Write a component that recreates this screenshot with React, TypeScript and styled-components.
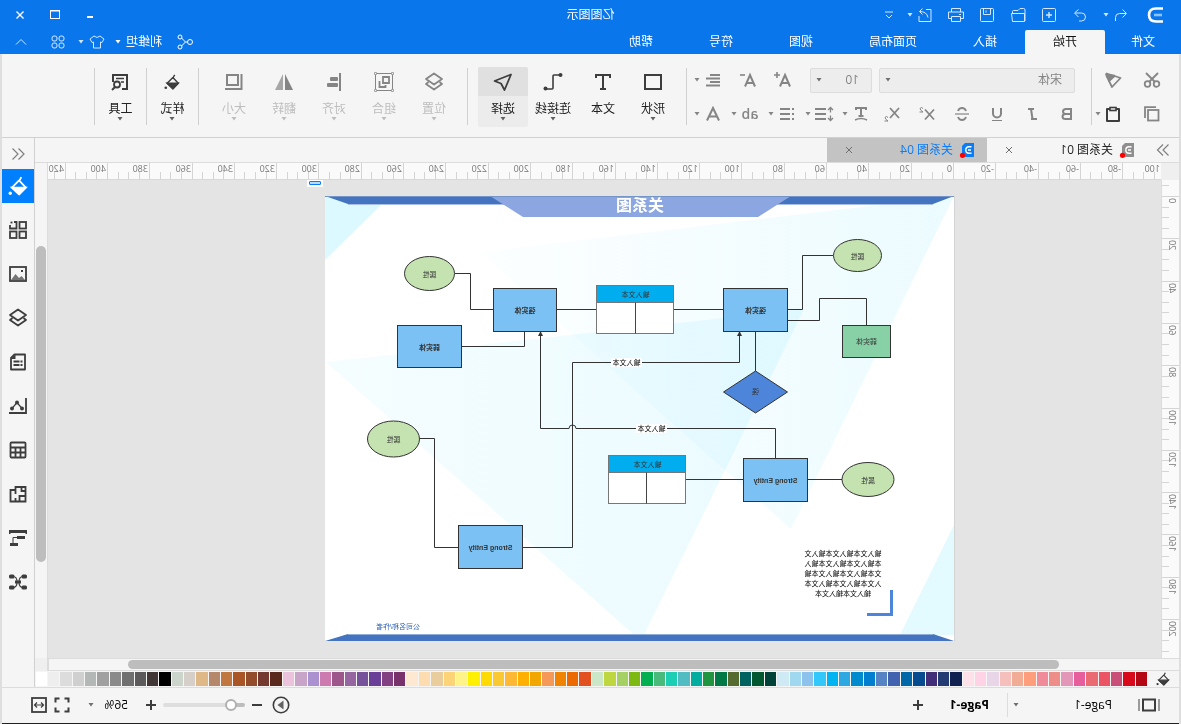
import React from "react";
import styled, { createGlobalStyle, css } from "styled-components";

const FONT = '"Open Sans", "Noto Sans CJK SC", sans-serif';

const Global = createGlobalStyle`
  *, *::before, *::after { box-sizing: border-box; }
  body { margin: 0; background: #f5f5f5; font-family: ${FONT}; font-size: 12px; line-height: 16px; color: #222; }
  button, select, input { font: inherit; color: inherit; margin: 0; }
  svg { display: block; flex: none; }
`;

/* The window is shown as a mirror image: everything is flipped once, here. */
const Shell = styled.div`
  display: flex;
  flex-direction: column;
  min-height: 100vh;
  transform: scaleX(-1);
`;

/* ---------- shared parts ---------- */

const PlainButton = styled.button`
  display: flex;
  align-items: center;
  justify-content: center;
  padding: 0;
  border: 0;
  background: none;
  white-space: nowrap;
`;

const IconButton = styled(PlainButton)<{ $w?: number }>`
  width: ${(p) => p.$w ?? 16}px;
  height: 20px;
`;

const Row = styled.div<{ $gap?: number }>`
  display: flex;
  align-items: center;
  gap: ${(p) => p.$gap ?? 0}px;
`;

type IconProps = { w?: number; h?: number; sw?: number; children: React.ReactNode };

const Icon = ({ w = 16, h = w, sw = 1, children }: IconProps) => (
  <svg width={w} height={h} viewBox={`0 0 ${w} ${h}`} fill="none" stroke="currentColor" strokeWidth={sw} aria-hidden="true">
    {children}
  </svg>
);

const Solid = ({ children }: { children: React.ReactNode }) => (
  <g fill="currentColor" stroke="none">{children}</g>
);

const Caret = () => (
  <Icon w={10} h={4}>
    <Solid><path d="M2.5 0h5L5 3.5z" /></Solid>
  </Icon>
);

const CaretButton = ({ label }: { label: string }) => (
  <IconButton $w={10} aria-label={label}><Caret /></IconButton>
);

/* ---------- title bar ---------- */

const TitleBar = styled.header`
  background: #0976ec;
  color: #fff;
`;

const TitleRow = styled.div`
  display: grid;
  grid-template-columns: 1fr auto 1fr;
  align-items: center;
  height: 30px;
`;

const QuickBar = styled.div`
  display: flex;
  align-items: center;
  gap: 11px;
  padding-left: 13px;
  color: #d5e8fd;
`;

const WindowButtons = styled.div`
  display: flex;
  justify-content: flex-end;
  padding-right: 3px;
`;

const WindowButton = styled(PlainButton)`
  width: 35px;
  height: 28px;
`;

const MenuRow = styled.div`
  display: flex;
  justify-content: space-between;
  height: 24px;
`;

const MenuTabs = styled.nav`
  display: flex;
  align-items: stretch;
`;

const MenuTab = styled(PlainButton)<{ $active?: boolean; $first?: boolean }>`
  padding: 0 ${(p) => (p.$first ? 26 : 28)}px;
  border-radius: 2px 2px 0 0;
  ${(p) => p.$active && css`background: #f5f5f5; color: #111;`}
`;

const UserArea = styled.div`
  display: flex;
  align-items: center;
  padding-right: 13px;
  gap: 21px;
  color: #d5e8fd;
`;

const UserButton = styled(PlainButton)`
  gap: 3px;
  color: #fff;
  & > svg:first-child { margin-right: 12px; }
`;

/* ---------- ribbon ---------- */

const Frame = styled.div`
  flex: 1;
  display: flex;
  flex-direction: column;
  border: solid #dedede;
  border-width: 0 2px;
`;

const Ribbon = styled.div`
  display: flex;
  align-items: flex-start;
  height: 84px;
  padding: 13px 0 0 17px;
  border-bottom: 1px solid #d0d0d0;
  background: #f5f5f5;
  color: #858585;
`;

const RibbonRows = styled.div<{ $w?: number }>`
  display: flex;
  flex-direction: column;
  gap: 8px;
  width: ${(p) => (p.$w ? p.$w + "px" : "auto")};
`;

const RibbonRow = styled(Row)`
  height: 26px;
`;

const Divider = styled.div<{ $before?: number; $after?: number }>`
  width: 1px;
  height: 57px;
  margin: 1px ${(p) => p.$after ?? 0}px 0 ${(p) => p.$before ?? 0}px;
  background: #d0d0d0;
`;

const SelectBox = styled.div<{ $w: number; $bare?: boolean }>`
  display: flex;
  align-items: center;
  position: relative;
  width: ${(p) => p.$w}px;
  height: 25px;
  ${(p) => p.$bare ? css`color: #000;` : css`
    border: 1px solid #dcdcdc;
    border-radius: 2px;
    background: #ededed;
  `}
  select {
    width: 100%;
    height: 100%;
    padding: 0 0 0 ${(p) => (p.$bare ? 0 : 12)}px;
    border: 0;
    background: none;
    appearance: none;
  }
  svg { position: absolute; right: ${(p) => (p.$bare ? 0 : 3)}px; pointer-events: none; color: #707070; }
`;

const Tool = styled.button<{ $w?: number; $selected?: boolean; $off?: boolean }>`
  display: flex;
  flex-direction: column;
  align-items: center;
  width: ${(p) => p.$w ?? 50}px;
  height: 60px;
  padding: 0;
  border: 0;
  border-radius: 2px;
  background: ${(p) => (p.$selected ? "#ececec" : "none")};
  color: ${(p) => (p.$off ? "#bdbdbd" : "#222")};
  overflow: hidden;
`;

const ToolIcon = styled.span<{ $selected?: boolean; $off?: boolean }>`
  display: flex;
  align-items: center;
  justify-content: center;
  align-self: stretch;
  height: 29px;
  margin-bottom: 5px;
  background: ${(p) => (p.$selected ? "#e0e0e0" : "none")};
  color: ${(p) => (p.$off ? "#858585" : "#3d3d3d")};
`;

const ToolCaret = styled.span<{ $off?: boolean }>`
  color: ${(p) => (p.$off ? "#bdbdbd" : "#606060")};
`;

/* ---------- workspace ---------- */

const Workspace = styled.div`
  flex: 1;
  display: flex;
`;

const MainColumn = styled.main`
  flex: 1;
  min-width: 0;
  display: flex;
  flex-direction: column;
`;

const DocTabs = styled.div`
  display: flex;
  height: 25px;
  border-bottom: 1px solid #dcdcdc;
  background: #f5f5f5;
  color: #808080;
`;

const ExpandButton = styled(PlainButton)`
  width: 32px;
  height: 24px;
`;

const DocTab = styled.div<{ $current?: boolean }>`
  display: flex;
  align-items: center;
  width: 160px;
  padding: 0 14px 0 11px;
  gap: 8px;
  background: ${(p) => (p.$current ? "#c3c3c3" : "none")};
  color: ${(p) => (p.$current ? "#0a7cf5" : "#222")};
  button:last-child { margin-left: auto; color: #707070; }
`;

const RulerRow = styled.div`
  display: flex;
  height: 17px;
  background: #f5f5f5;
`;

const RulerCorner = styled.div`
  width: 18px;
  background: #efefef;
`;

const HRuler = styled.div`
  flex: 1;
  min-width: 0;
  overflow: hidden;
  border-bottom: 1px solid #d8d8d8;
  background: #fafafa;
  svg { width: 100%; }
`;

const RulerEnd = styled.div`
  width: 13px;
  border-left: 1px solid #dcdcdc;
`;

const RulerText = styled.text<{ $end?: boolean }>`
  font: 9px ${FONT};
  fill: #777;
  text-anchor: ${(p) => (p.$end ? "end" : "start")};
`;

const CanvasRow = styled.div`
  flex: 1;
  display: flex;
  min-height: 478px;
`;

const VRuler = styled.div`
  width: 18px;
  background: #fafafa;
  border-right: 1px solid #dcdcdc;
`;

const Canvas = styled.div`
  flex: 1;
  min-width: 0;
  display: flex;
  align-items: flex-start;
  gap: 2px;
  padding: 0 0 0 207px;
  background: #e4e4e4;
  overflow: hidden;
`;

const Sheet = styled.div`
  margin-top: 16px;
  background: #fff;
  box-shadow: -1px 0 0 #d4d4d4;
`;

const PageMark = styled.div`
  width: 16px;
  height: 7px;
  padding: 1px 2px 2px;
  background: #fff;
  &::before {
    content: "";
    display: block;
    height: 4px;
    border: 1px solid #0a7cf5;
    border-radius: 1px;
    background: #b8dcff;
  }
`;

const VScroll = styled.div`
  width: 13px;
  padding: 0 1px;
  border-left: 1px solid #dcdcdc;
  background: #f5f5f5;
  display: grid;
  grid-template-rows: 66fr 316fr 96fr;
`;

const Thumb = styled.div`
  border-radius: 5px;
  background: #bdbdbd;
`;

const HScrollRow = styled.div`
  display: flex;
  height: 13px;
  background: #efefef;
`;

const HScroll = styled.div`
  flex: 1;
  display: grid;
  grid-template-columns: 120fr 932fr 79fr;
  padding: 1px 0;
  border: 1px solid #dcdcdc;
  border-left: 0;
  background: #f5f5f5;
`;

const Palette = styled.div`
  display: flex;
  height: 16px;
  align-items: center;
  padding-right: 1px;
  background: #f5f5f5;
`;

const PaletteLead = styled.div`
  display: flex;
  justify-content: center;
  width: 32px;
  color: #3d3d3d;
`;

const Swatches = styled.div`
  flex: 1;
  display: flex;
  gap: 1px;
`;

const Swatch = styled.button<{ $c: string }>`
  flex: 1;
  min-width: 0;
  height: 14px;
  padding: 0;
  border: 0;
  background: ${(p) => p.$c};
`;

const SidePanel = styled.aside`
  width: 33px;
  border-left: 1px solid #d0d0d0;
  background: #f5f5f5;
  display: flex;
  flex-direction: column;
  gap: 10px;
  color: #3d3d3d;
`;

const Collapse = styled(PlainButton)`
  height: 31px;
  margin-bottom: -10px;
  color: #808080;
`;

const SideButton = styled(PlainButton)<{ $active?: boolean }>`
  height: 34px;
  ${(p) => p.$active && css`background: #007fff; color: #fff;`}
`;

/* ---------- status bar ---------- */

const StatusBar = styled.footer`
  display: flex;
  justify-content: space-between;
  align-items: center;
  height: 37px;
  padding: 0 29px 1px 19px;
  border-top: 1px solid #dcdcdc;
  border-bottom: 1px solid #222;
  background: #f5f5f5;
  color: #3d3d3d;
`;

const StatusDivider = styled.div`
  width: 1px;
  height: 24px;
  margin: 0 18px 0 3px;
  background: #dcdcdc;
`;

const PageTab = styled(PlainButton)`
  margin-right: 24px;
  font-weight: 700;
  color: #000;
`;

const PageSelect = styled(SelectBox)`
  margin-left: 26px;
`;

const Zoom = styled.input`
  width: 82px;
  height: 14px;
  appearance: none;
  background: none;
  &::-webkit-slider-runnable-track {
    height: 4px;
    border-radius: 2px;
    background: linear-gradient(to right, #bdbdbd 16%, #dedede 16%);
  }
  &::-webkit-slider-thumb {
    appearance: none;
    width: 12px;
    height: 12px;
    margin-top: -4px;
    border: 2px solid #b0b0b0;
    border-radius: 50%;
    background: #fff;
  }
`;

/* ---------- icons ---------- */

const BucketShape = ({ s = 18 }: { s?: number }) => (
  <svg width={s} height={s} viewBox="0 0 18 18" fill="none" stroke="currentColor" strokeWidth="1.600" aria-hidden="true">
    <path d="M6 1l2 3.500M8 4L2 10.500l6 6 6.500-6z" strokeLinejoin="round" />
    <path d="M2 10.500h12.500l-6.500 6z" fill="currentColor" />
    <circle cx="16" cy="15.500" r="1.500" fill="currentColor" stroke="none" />
  </svg>
);

const LayersShape = ({ s = 20 }: { s?: number }) => (
  <svg width={s} height={s} viewBox="0 0 20 20" fill="none" stroke="currentColor" strokeWidth="1.800" aria-hidden="true">
    <path d="M10 1.500L18 7l-8 5.500L2 7z" strokeLinejoin="round" />
    <path d="M4.500 10L2 12l8 5.500 8-5.500-2.500-2" strokeLinejoin="round" />
  </svg>
);

const Logo = () => (
  <svg width="16" height="18" viewBox="0 0 16 18" fill="none" stroke="#fff" aria-hidden="true">
    <path d="M0 2.500h7C11.500 2.500 14 5 14 9s-2.500 6.500-7 6.500H0" strokeWidth="2.600" />
    <path d="M1 9h8" strokeWidth="2.600" stroke="#8cc2fa" />
  </svg>
);

const FileBadge = ({ color }: { color: string }) => (
  <svg width="17" height="16" viewBox="0 0 17 16" aria-hidden="true">
    <path d="M2 1h9l3 3v11H2z" fill={color} />
    <path d="M4.500 4.800H7q3.200 0 3.200 3.200T7 11.200H4.500M5 8h3" fill="none" stroke="#fff" strokeWidth="1.400" />
    <circle cx="13.500" cy="13.300" r="2.600" fill="#f00" />
  </svg>
);

const CloseX = () => <Icon w={8}><path d="M1 1l6 6M7 1L1 7" /></Icon>;

/* ---------- ribbon content ---------- */

const Split = ({ label, children }: { label: string; children: React.ReactNode }) => (
  <Row $gap={3}>
    <IconButton aria-label={label}>{children}</IconButton>
    <CaretButton label={label + "选项"} />
  </Row>
);

const Glyph = styled.span`
  font: 600 14px/20px "Open Sans", sans-serif;
`;

const BigA = ({ mark }: { mark: string }) => (
  <Icon w={18} sw={2}>
    <path d="M2 15.500L7 4l5 11.500M4 12h6" />
    <path d={mark} strokeWidth="1.600" />
  </Icon>
);

type ToolSpec = { name: string; icon: React.ReactNode; caret?: boolean; selected?: boolean; off?: boolean; w?: number };

const RibbonTool = ({ name, icon, caret = true, selected, off, w }: ToolSpec) => (
  <Tool $w={w} $selected={selected} $off={off} disabled={off}>
    <ToolIcon $selected={selected} $off={off}>{icon}</ToolIcon>
    {name}
    {caret && <ToolCaret $off={off}><Caret /></ToolCaret>}
  </Tool>
);

const drawTools: ToolSpec[] = [
  { name: "形状", icon: <Icon w={20} sw={2}><rect x="2" y="3" width="16" height="14" /></Icon> },
  { name: "文本", caret: false, icon: <Icon w={20} sw={2}><path d="M3 6V3h14v3M10 3v14M7 17h6" /></Icon> },
  {
    name: "连接线",
    icon: <Icon w={20} sw={1.6}><path d="M3 3h6q1 0 1 1v12q0 1 1 1h5" /><Solid><circle cx="2.500" cy="3" r="2" /><circle cx="17.500" cy="16.500" r="2" /></Solid></Icon>,
  },
  { name: "选择", selected: true, icon: <Icon w={20} sw={1.8}><path d="M2 2.500L18.500 9 12 11.500 8.500 18z" strokeLinejoin="round" /></Icon> },
];

const arrangeTools: ToolSpec[] = [
  { name: "位置", off: true, icon: <LayersShape /> },
  {
    name: "组合",
    off: true,
    icon: (
      <Icon w={20} sw={1}>
        <rect x="1.500" y="1.500" width="17" height="17" />
        <g fill="#f5f5f5"><circle cx="1.500" cy="1.500" r="1.200" /><circle cx="18.500" cy="1.500" r="1.200" /><circle cx="1.500" cy="18.500" r="1.200" /><circle cx="18.500" cy="18.500" r="1.200" /></g>
        <path d="M5 5h6v6H5zM14.500 9v6H8.500v-2" strokeWidth="1.800" />
      </Icon>
    ),
  },
  { name: "对齐", off: true, icon: <Icon w={20}><Solid><path d="M3 1h2v18H3z" /><rect x="6" y="5" width="8" height="4" rx="1" /><rect x="6" y="11" width="11" height="4" rx="1" /></Solid></Icon> },
  { name: "翻转", off: true, icon: <Icon w={20}><Solid><path d="M9 2v16H1z" /><path d="M11 2v16h8z" opacity=".7" /></Solid></Icon> },
  { name: "大小", off: true, icon: <Icon w={20} sw={2}><rect x="6" y="3" width="11" height="10" /><path d="M2.500 2v15H19" /></Icon> },
];

const RibbonBar = () => (
  <Ribbon>
    <RibbonRows $w={70}>
      <RibbonRow $gap={19}>
        <IconButton $w={20} aria-label="剪切">
          <Icon w={18} sw={1.8}><circle cx="4.500" cy="13" r="2.800" /><circle cx="13.500" cy="13" r="2.800" /><path d="M3 2l9 9M15 2l-9 9" /></Icon>
        </IconButton>
        <IconButton $w={20} aria-label="格式刷">
          <Icon w={18} sw={1.8}><path d="M1.500 7l6-2 5.500 5-3 6z" strokeLinejoin="round" /><Solid><path d="M6.500 4l7 7 2.500-5 1-3-1.500-1.500-2.500 1z" /></Solid></Icon>
        </IconButton>
      </RibbonRow>
      <RibbonRow $gap={19}>
        <IconButton $w={20} aria-label="复制">
          <Icon w={16} sw={1.8}><rect x="1.500" y="4" width="10.500" height="10.500" /><path d="M4 1.200h11V12" /></Icon>
        </IconButton>
        <Row>
          <IconButton $w={20} aria-label="粘贴">
            <svg width="16" height="16" viewBox="0 0 16 16" fill="none" stroke="#3d3d3d" strokeWidth="2" aria-hidden="true"><path d="M5 3H2v12h12V3h-3" strokeLinejoin="round" /><rect x="5" y="1.500" width="6" height="3" strokeWidth="1.600" /></svg>
          </IconButton>
          <CaretButton label="粘贴选项" />
        </Row>
      </RibbonRow>
    </RibbonRows>
    <Divider $after={16} />
    <RibbonRows>
      <RibbonRow $gap={7}>
        <SelectBox $w={196}>
          <select aria-label="字体"><option>宋体</option></select>
          <Caret />
        </SelectBox>
        <Row $gap={19}>
          <SelectBox $w={62}>
            <select aria-label="字号"><option>10</option></select>
            <Caret />
          </SelectBox>
          <IconButton aria-label="增大字号"><BigA mark="M12 4h6M15 1v6" /></IconButton>
          <IconButton aria-label="减小字号"><BigA mark="M12 4h5" /></IconButton>
          <Split label="对齐方式"><Icon sw={1.8}><path d="M1 3h10M1 6.500h14M1 10h10M1 13.500h14" /></Icon></Split>
        </Row>
      </RibbonRow>
      <RibbonRow $gap={15}>
        <Row $gap={19}>
          <IconButton aria-label="加粗"><Icon sw={2}><path d="M4 3h5q3 0 3 2.500T9 8H4h5.500q3 0 3 2.500t-3 2.500H4z" /></Icon></IconButton>
          <IconButton aria-label="倾斜"><Icon sw={2}><path d="M6 3h6M9 3L7.500 13M3 13h6" /></Icon></IconButton>
          <IconButton aria-label="下划线"><Icon sw={2}><path d="M4 2v5.500a4 4 0 0 0 8 0V2" /><path d="M3 14.500h10" strokeWidth="1" /></Icon></IconButton>
          <IconButton aria-label="删除线"><Icon sw={1.8}><path d="M12 5q-1-3-4-3t-4 3M4 11q1 3 4 3t4-3" /><path d="M1 8h14" strokeWidth="1.200" /></Icon></IconButton>
          <IconButton aria-label="上标"><Icon w={18} h={16} sw={1.8}><path d="M2 3.500l9 10M11 3.500l-9 10" /><path d="M13 2.500q1.500-2 3 0 0 1.500-3 3.500h3.500" strokeWidth="1" /></Icon></IconButton>
          <IconButton aria-label="下标"><Icon w={18} h={16} sw={1.8}><path d="M2 2l9 10M11 2l-9 10" /><path d="M13 11.500q1.500-2 3 0 0 1.500-3 3.500h3.500" strokeWidth="1" /></Icon></IconButton>
        </Row>
        <Row $gap={8}>
          <Split label="文字方向"><Icon sw={2}><path d="M3 4V2h10v2M8 2v8M5.500 10h5" /><path d="M2 14q6-3 12 0" strokeWidth="1.400" /></Icon></Split>
          <Split label="行距"><Icon w={20} h={16}><path d="M3.500 1.500v5M3.500 9.500v5M1 4l2.500-2.500L6 4M1 12l2.500 2.500L6 12" strokeWidth="1.300" /><path d="M8 3h11M8 8h11M8 13h11" strokeWidth="1.800" /></Icon></Split>
          <Split label="项目符号"><Icon w={16} sw={1.8}><path d="M1 3h2M1 8h2M1 13h2M5 3h10M5 8h10M5 13h10" /></Icon></Split>
          <Split label="大小写"><Glyph>ab</Glyph></Split>
          <Split label="字体颜色"><Icon sw={2}><path d="M2 14.500L8 2l6 12.500M4.500 10.500h7" /></Icon></Split>
        </Row>
      </RibbonRow>
    </RibbonRows>
    <Divider $before={5} $after={8} />
    {drawTools.map((t) => <RibbonTool key={t.name} {...t} />)}
    <Divider $before={10} $after={8} />
    {arrangeTools.map((t) => <RibbonTool key={t.name} {...t} />)}
    <Divider $before={10} />
    <RibbonTool name="样式" w={51} icon={<BucketShape s={16} />} />
    <Divider />
    <RibbonTool
      name="工具"
      w={51}
      icon={<Icon w={18} sw={2}><path d="M7 16H2V2h14v7" /><path d="M5 5.500h8M5 9h3" strokeWidth="1.400" /><circle cx="12" cy="11.500" r="3" strokeWidth="1.800" /><path d="M14 14l3 3" /></Icon>}
    />
    <Divider />
  </Ribbon>
);

/* ---------- rulers ---------- */

const STEP = 42.3;
const ORIGIN_X = 207;
const ORIGIN_Y = 16;

const range = (from: number, to: number) => Array.from({ length: to - from + 1 }, (_, i) => from + i);

const HorizontalRuler = () => (
  <svg height="16" aria-hidden="true">
    {range(-20, 88).map((q) => {
      const x = Math.round(ORIGIN_X + (q * STEP) / 4) + 0.5;
      return <path key={q} d={q % 4 ? `M${x} 9v7` : `M${x} 0v16`} stroke="#d4d4d4" />;
    })}
    {/* the minus sign of the first label lies under the corner */}
    <RulerText x="1" y="9">100</RulerText>
    {range(-4, 21).map((n) => (
      <RulerText key={n} x={Math.round(ORIGIN_X + n * STEP) + 2} y="9">{String(n * 20)}</RulerText>
    ))}
  </svg>
);

const VerticalRuler = () => (
  <svg width="17" height="478" aria-hidden="true">
    {range(-1, 43).map((q) => {
      const y = Math.round(ORIGIN_Y + (q * STEP) / 4) + 0.5;
      return <path key={q} d={q % 4 ? `M10 ${y}h7` : `M0 ${y}h17`} stroke="#d4d4d4" />;
    })}
    {range(0, 10).map((n) => (
      <RulerText key={n} $end transform={`translate(10 ${Math.round(ORIGIN_Y + n * STEP) + 2}) rotate(-90)`}>
        {String(n * 20)}
      </RulerText>
    ))}
  </svg>
);

/* ---------- diagram ---------- */

const Label = styled.text<{ $size?: number; $bold?: boolean; $fill?: string }>`
  font: ${(p) => (p.$bold ? 700 : 400)} ${(p) => p.$size ?? 7}px "Liberation Sans", "Noto Sans CJK SC", sans-serif;
  fill: ${(p) => p.$fill ?? "#333"};
  text-anchor: middle;
`;

const boxes = [
  { x: 166.5, y: 92.5, w: 64, h: 43, text: "强实体" },
  { x: 397.5, y: 92.5, w: 63, h: 43, text: "强实体" },
  { x: 492.5, y: 129.5, w: 64, h: 42, text: "弱实体" },
  { x: 146.5, y: 262.5, w: 64, h: 43, text: "Strong Entity" },
  { x: 431.5, y: 329.5, w: 64, h: 43, text: "Strong Entity" },
];

const ellipses = [
  { cx: 96.5, cy: 59.5, rx: 24, ry: 16 },
  { cx: 524.5, cy: 77.5, rx: 25, ry: 17 },
  { cx: 560.5, cy: 243, rx: 26, ry: 18 },
  { cx: 86, cy: 283.5, rx: 26, ry: 17 },
];

const tables = [
  { x: 280.5, y: 89.5, split: 38 },
  { x: 268.5, y: 259.5, split: 39 },
];

const wires = [
  "M121 59.5H151.5V113.5H166",
  "M87.5 129V102.5H134.5V124.5H166",
  "M198.5 135V175",
  "M231 113.5H280",
  "M358 113.5H397",
  "M499 77.5H483.5V113.5H461",
  "M492 150.5H429.5V136",
  "M214.5 138V166.5H381.5V351.5H431",
  "M413.5 138V232.5H385a3.5 3.5 0 0 0 -7 0H178.5V262",
  "M534 242.5H519.5V351.5H496",
  "M211 283.5H268",
  "M112 283.5H146",
];

const noteLines = [
  "输入文本输入文本输入文",
  "本输入文本输入文本输入",
  "文本输入文本输入文本输",
  "入文本输入文本输入文本",
  "输入文本输入文本",
];

const Diagram = () => (
  <svg width="629" height="445" viewBox="0 0 629 445" role="img" aria-label="关系图">
    <defs>
      <linearGradient id="fadeA" x1="0" y1="0" x2="1" y2="0">
        <stop offset="0" stopColor="#7fe6ff" stopOpacity=".15" />
        <stop offset="1" stopColor="#7fe6ff" stopOpacity=".02" />
      </linearGradient>
      <linearGradient id="fadeB" x1="0" y1="0" x2="1" y2="0">
        <stop offset="0" stopColor="#7fe6ff" stopOpacity=".16" />
        <stop offset="1" stopColor="#7fe6ff" stopOpacity=".08" />
      </linearGradient>
    </defs>
    <path d="M0 0L474 56 163 333z" fill="url(#fadeA)" />
    <path d="M628 166L150 113 313 445z" fill="url(#fadeB)" />
    <path d="M629 0L572 8 629 64z" fill="#dcf9ff" />
    <path d="M0 329L54 439H0z" fill="#e3faff" />
    <path d="M0 0H629L606 8H21z" fill="#4474c0" />
    <path d="M21 8.500H606" stroke="#a9bfe6" />
    <path d="M163 0H464L431 21H196z" fill="#8ba6e0" />
    <path d="M0 .5H629" stroke="#7594c8" />
    <path d="M21 438H606L629 445H0z" fill="#4474c0" />
    <path d="M21 438.500H606" stroke="#8fadda" />
    <Label $bold $size={16} $fill="#fff" x="314" y="15">关系图</Label>

    <g fill="none" stroke="#333">{wires.map((d) => <path key={d} d={d} />)}</g>
    <path d="M212 140l2.500-5 2.500 5zM411 140l2.500-5 2.500 5z" fill="#333" />

    {boxes.map((b) => (
      <g key={b.x}>
        <rect x={b.x} y={b.y} width={b.w} height={b.h} fill="#7cc1f3" stroke="#333" />
        <Label $bold x={b.x + b.w / 2} y={b.y + b.h / 2 + 3}>{b.text}</Label>
      </g>
    ))}
    <rect x="63.500" y="129.500" width="48" height="32" fill="#88d1a6" stroke="#333" />
    <Label x="87.500" y="148">弱实体</Label>
    {ellipses.map((e) => (
      <g key={e.cx}>
        <ellipse {...e} fill="#c5e3b1" stroke="#333" />
        <Label x={e.cx} y={e.cy + 3}>属性</Label>
      </g>
    ))}
    <path d="M198.500 175l32 21-32 21-32-21z" fill="#4d85da" stroke="#333" />
    <Label x="198.500" y="198">强</Label>
    {tables.map((t) => (
      <g key={t.x} stroke="#777">
        <rect x={t.x} y={t.y} width="77" height="48" fill="#fff" />
        <rect x={t.x} y={t.y} width="77" height="17" fill="#00aeef" />
        <path d={`M${t.x + t.split} ${t.y + 17}v31`} stroke="#444" />
        <Label stroke="none" x={t.x + 38} y={t.y + 11}>输入文本</Label>
      </g>
    ))}
    <rect x="312" y="162" width="31" height="9" fill="#fff" />
    <Label $fill="#000" x="327.500" y="169">输入文本</Label>
    <rect x="287" y="228" width="31" height="9" fill="#fff" />
    <Label $fill="#000" x="302.500" y="235">输入文本</Label>

    {noteLines.map((line, i) => (
      <Label key={line} $fill="#000" x="111" y={360 + i * 10}>{line}</Label>
    ))}
    <path d="M62.500 394v24.500H87" fill="none" stroke="#4d85da" strokeWidth="3" />
    <Label $fill="#2f62b4" x="556" y="433">公司名称/作者</Label>
  </svg>
);

/* ---------- palette ---------- */

const colors = (
  "b50614 d9091c c94f79 ea5465 ea6b72 e65e9b e297b8 ee8e88 f08c99 ff9e7a f0ac94 f5bfbb e9d5e8 fdd3e5 fde0e8 " +
  "122250 243a72 422d79 064a90 0068a7 4162ae 5583c4 007fd0 008bcf 2ea8e1 00b4f1 33c7fa 8cc2ec 9fd8ef cfe9f5 " +
  "00423a 005830 006360 556b30 007947 20943f 00ad9e 51bcc1 1bceb4 48ba7a 00b050 7cb912 a5d063 bed741 cce7c8 " +
  "e35020 ec6800 f08300 f49957 f2a700 ffb000 ffb833 fac832 ffda00 ffef00 fdf389 fdd378 eacd9c fddcaf fde8d2 " +
  "78316b 823f82 693f98 75529a 9666a0 9e578b cc7ab0 ab91d0 c8a5c8 ecc3dc " +
  "5a281c 743a30 944d2a a95526 c17740 b5886c dfb888 d6cec8 cbd5cc " +
  "000000 413737 5c5a5b 707070 8a8a8a a0a0a0 b3b8b6 cfcfcf dcdcdc eeeeee ffffff"
).split(" ");

/* ---------- side panel ---------- */

const sideItems: { name: string; icon: React.ReactNode }[] = [
  { name: "填充", icon: <BucketShape s={20} /> },
  { name: "符号库", icon: <Icon w={18} sw={1.8}><rect x="1" y="1" width="6.500" height="6.500" /><path d="M13 1h-2.500v6.500H17V4" /><path d="M14.500 1.500h3" strokeDasharray="2 1" /><rect x="1" y="10.500" width="6.500" height="6.500" /><rect x="10.500" y="10.500" width="6.500" height="6.500" /></Icon> },
  { name: "图片", icon: <Icon w={18} sw={1.8}><rect x="1" y="2" width="16" height="14" /><Solid><path d="M2 15l3.500-4L8 13l3.500-4 4.500 6z" opacity=".7" /><path d="M4 5h2v2H4z" /></Solid></Icon> },
  { name: "图层", icon: <LayersShape /> },
  { name: "备注", icon: <Icon w={18} sw={1.8}><path d="M2 1.500h10.500l3.500 3.500v11.500H2z" strokeLinejoin="round" /><path d="M4.500 8.500h2M7.500 8.500h6M4.500 12h2M7.500 12h6" /><Solid><path d="M11.500 1v5H16z" /></Solid></Icon> },
  { name: "图表", icon: <Icon w={18} sw={1.8}><path d="M1 1v15h17" /><path d="M5 11.500l5-6 5 6" strokeWidth="1.200" /><Solid><circle cx="5" cy="11.500" r="2" /><circle cx="10" cy="5.500" r="2" /><circle cx="15" cy="11.500" r="2" /></Solid></Icon> },
  { name: "表格", icon: <Icon w={18} sw={1.8}><rect x="1.500" y="1.500" width="15" height="15" rx="1" /><path d="M1.500 6.500h15M1.500 11.500h15M6.500 6.500v10M11.500 6.500v10" /></Icon> },
  { name: "平面图", icon: <Icon w={18} sw={1.8}><path d="M1.500 2h10v3h5v11.500h-15zM1.500 6h4v-4M1.500 11h6v5.500M11.500 5v4M11.500 16v-3" /></Icon> },
  { name: "甘特图", icon: <Icon w={18} sw={1}><Solid><path d="M0 1h18v4h-1l-1-1H2L1 5H0zM2 7h8v3H2zM9 14h8v3H9z" /></Solid><path d="M10 8.500h4V14" /></Icon> },
  { name: "思维导图", icon: <Icon w={18} sw={1.2}><path d="M4 3.500q4 0 4 5.500t-4 5.500M14 3.500q-4 0-4 5.500t4 5.500M6 9h6" /><Solid><rect x="0" y="1.500" width="5.500" height="4" rx="1.500" /><rect x="12.500" y="1.500" width="5.500" height="4" rx="1.500" /><rect x="0" y="12.500" width="5.500" height="4" rx="1.500" /><rect x="12.500" y="12.500" width="5.500" height="4" rx="1.500" /><rect x="6" y="7.500" width="6" height="3" /></Solid></Icon> },
];

const menus = ["文件", "开始", "插入", "页面布局", "视图", "符号", "帮助"];

export default function App() {
  return (
    <>
      <Global />
      <Shell>
        <TitleBar>
          <TitleRow>
            <QuickBar>
              <IconButton $w={26} aria-label="亿图图示"><Logo /></IconButton>
              <Row>
                <IconButton $w={20} aria-label="撤销"><Icon w={14}><path d="M12.500 13V9.500a4 4 0 0 0-4-4H2M5.500 1.500l-4 4 4 4" /></Icon></IconButton>
                <CaretButton label="撤销历史" />
              </Row>
              <IconButton $w={20} aria-label="重做"><Icon w={14}><path d="M12 5H5.500a3.800 3.800 0 0 0 0 8H8M8.500 1.500L12.500 5l-4 4" /></Icon></IconButton>
              <IconButton $w={20} aria-label="新建"><Icon w={14}><rect x=".5" y=".5" width="13" height="13" rx="1" /><path d="M7 4v6M4 7h6" strokeWidth="1.400" /></Icon></IconButton>
              <IconButton $w={20} aria-label="打开"><Icon w={16} h={14}><path d="M1 13V2q0-1.500 1.500-1.500H6l2 2h4.500q1 0 1 1V5M1.500 5.500h13L13.500 13.500h-12z" strokeLinejoin="round" /></Icon></IconButton>
              <IconButton $w={20} aria-label="保存"><Icon w={14}><rect x=".5" y=".5" width="13" height="13" rx="1" /><path d="M3.500 .5v6h7v-6M8 2.500v2" /></Icon></IconButton>
              <IconButton $w={20} aria-label="打印"><Icon w={16} h={14}><path d="M3.500 4V.5h9V4M3.500 10.500h-3V4h15v6.500h-3M3.500 8.500h9v5h-9zM3 6.500h2" strokeLinejoin="round" /></Icon></IconButton>
              <Row>
                <IconButton $w={20} aria-label="导出"><Icon w={14}><path d="M6 1.500H1v12h12V8M4 9.500Q5 3.500 12.500 3.500M9.500 .5l3 3-3 3" /></Icon></IconButton>
                <CaretButton label="导出选项" />
              </Row>
              <IconButton $w={10} aria-label="自定义快速访问"><Icon w={8}><path d="M0 1h8M1 4l3 3 3-3" /></Icon></IconButton>
            </QuickBar>
            <span>亿图图示</span>
            <WindowButtons>
              <WindowButton aria-label="最小化"><Icon w={8} sw={2}><path d="M1 6h6" /></Icon></WindowButton>
              <WindowButton aria-label="最大化"><Icon w={10}><rect x=".5" y=".5" width="9" height="8" /><path d="M0 1h10" /></Icon></WindowButton>
              <WindowButton aria-label="关闭"><Icon w={10} sw={1.4}><path d="M1.500 1.500l7 7M8.500 1.500l-7 7" /></Icon></WindowButton>
            </WindowButtons>
          </TitleRow>
          <MenuRow>
            <MenuTabs>
              {menus.map((m, i) => (
                <MenuTab key={m} $first={i === 0} $active={m === "开始"}>{m}</MenuTab>
              ))}
            </MenuTabs>
            <UserArea>
              <Row $gap={10}>
                <Row $gap={7}>
                  <UserButton>
                    <Icon w={16}><circle cx="3" cy="8" r="2.500" /><circle cx="13" cy="3" r="2" /><circle cx="13" cy="13" r="2" /><path d="M5.500 8h2l4-4M7.500 8l4 4" /></Icon>
                    利维坦
                    <Caret />
                  </UserButton>
                  <Row $gap={2}>
                    <IconButton $w={18} aria-label="皮肤"><Icon w={16} h={14}><path d="M5 1L1 4l2 3.500L4.500 7v6h7V7l1.500.5L15 4l-4-3q-3 3-6 0z" strokeLinejoin="round" /></Icon></IconButton>
                    <CaretButton label="皮肤选项" />
                  </Row>
                </Row>
                <IconButton aria-label="应用"><Icon w={14}><rect x="1" y="1" width="5" height="5" rx="2" /><rect x="8" y="1" width="5" height="5" rx="2" /><rect x="1" y="8" width="5" height="5" rx="2" /><rect x="8" y="8" width="5" height="5" rx="2" /></Icon></IconButton>
              </Row>
              <IconButton aria-label="收起功能区"><Icon w={12} h={8}><path d="M1 6.500l5-5 5 5" /></Icon></IconButton>
            </UserArea>
          </MenuRow>
        </TitleBar>

        <Frame>
          <RibbonBar />
          <Workspace>
            <MainColumn>
              <DocTabs>
                <ExpandButton aria-label="展开符号库"><Icon w={14} sw={1.2}><path d="M1.500 1.500L7 7l-5.500 5.500M7 1.500L12.500 7 7 12.500" /></Icon></ExpandButton>
                <DocTab>
                  <Row $gap={6}><FileBadge color="#8f8f8f" />关系图 01</Row>
                  <IconButton aria-label="关闭"><CloseX /></IconButton>
                </DocTab>
                <DocTab $current>
                  <Row $gap={6}><FileBadge color="#0a7cf5" />关系图 04</Row>
                  <IconButton aria-label="关闭"><CloseX /></IconButton>
                </DocTab>
              </DocTabs>
              <RulerRow>
                <RulerCorner />
                <HRuler><HorizontalRuler /></HRuler>
                <RulerEnd />
              </RulerRow>
              <CanvasRow>
                <VRuler><VerticalRuler /></VRuler>
                <Canvas>
                  <Sheet><Diagram /></Sheet>
                  <PageMark />
                </Canvas>
                <VScroll><span /><Thumb /></VScroll>
              </CanvasRow>
              <HScrollRow>
                <HScroll><span /><Thumb /></HScroll>
                <RulerEnd />
              </HScrollRow>
              <Palette>
                <PaletteLead><BucketShape s={14} /></PaletteLead>
                <Swatches>
                  {colors.map((c) => <Swatch key={c} $c={"#" + c} aria-label={"#" + c} />)}
                </Swatches>
              </Palette>
            </MainColumn>
            <SidePanel>
              <Collapse aria-label="收起面板"><Icon w={14} sw={1.2}><path d="M6.500 1.500L1 7l5.500 5.500M12.500 1.500L7 7l5.500 5.500" /></Icon></Collapse>
              {sideItems.map((s, i) => (
                <SideButton key={s.name} $active={i === 0} aria-label={s.name}>{s.icon}</SideButton>
              ))}
            </SidePanel>
          </Workspace>
          <StatusBar>
            <Row>
              <IconButton $w={22} aria-label="页面视图"><Icon w={22} h={14} sw={2}><path d="M1 1v12M21 1v12" strokeWidth="1.400" opacity=".7" /><rect x="5" y="1.500" width="12" height="11" /></Icon></IconButton>
              <PageSelect $w={101} $bare>
                <select aria-label="页面"><option>Page-1</option></select>
                <Caret />
              </PageSelect>
              <StatusDivider />
              <PageTab>Page-1</PageTab>
              <IconButton aria-label="添加页面"><Icon w={10} sw={2}><path d="M5 0v10M0 5h10" /></Icon></IconButton>
            </Row>
            <Row $gap={17}>
              <Row $gap={6}>
                <IconButton $w={24} aria-label="演示"><Icon w={18} sw={1.6}><circle cx="9" cy="9" r="7.700" /><Solid><path d="M6.500 4.500v9L12.500 9z" opacity=".8" /></Solid></Icon></IconButton>
                <IconButton $w={12} aria-label="缩小"><Icon w={10} sw={2}><path d="M0 5h10" /></Icon></IconButton>
                <Zoom type="range" min={0} max={100} defaultValue={12} aria-label="缩放" />
                <IconButton $w={12} aria-label="放大"><Icon w={10} sw={2}><path d="M5 0v10M0 5h10" /></Icon></IconButton>
              </Row>
              <Row $gap={16}>
                <SelectBox $w={42} $bare>
                  <select aria-label="缩放比例"><option>56%</option></select>
                  <Caret />
                </SelectBox>
                <Row $gap={7}>
                  <IconButton aria-label="全屏"><Icon w={16} sw={2}><path d="M1.500 5.500v-4h4M10.500 1.500h4v4M14.500 10.500v4h-4M5.500 14.500h-4v-4" /></Icon></IconButton>
                  <IconButton aria-label="适应宽度"><Icon w={16} sw={1.8}><rect x="1" y="1" width="14" height="14" /><path d="M4 8h8M6 5.500L3.500 8 6 10.500M10 5.500L12.500 8 10 10.500" strokeWidth="1.200" /></Icon></IconButton>
                </Row>
              </Row>
            </Row>
          </StatusBar>
        </Frame>
      </Shell>
    </>
  );
}
